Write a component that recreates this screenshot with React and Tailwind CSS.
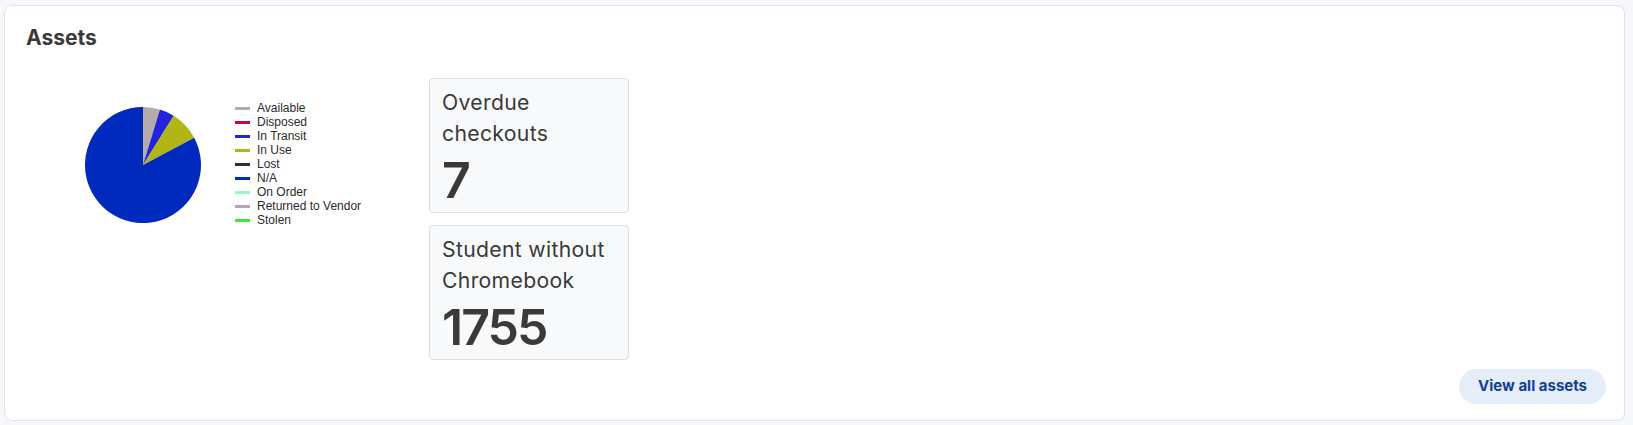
import React from "react";

const legend = [
  ["Available", "#b4acac"],
  ["Disposed", "#d8003a"],
  ["In Transit", "#2323d9"],
  ["In Use", "#b1b614"],
  ["Lost", "#263238"],
  ["N/A", "#0029bd"],
  ["On Order", "#93f6cd"],
  ["Returned to Vendor", "#b7a1c2"],
  ["Stolen", "#3be83b"],
];

const slices = [
  [0, 17, "#b4acac"],
  [17, 32, "#2323d9"],
  [32, 62, "#b1b614"],
  [62, 360, "#0029bd"],
];

function arc(cx, cy, r, a0, a1) {
  const rad = (a) => ((a - 90) * Math.PI) / 180;
  const x0 = cx + r * Math.cos(rad(a0));
  const y0 = cy + r * Math.sin(rad(a0));
  const x1 = cx + r * Math.cos(rad(a1));
  const y1 = cy + r * Math.sin(rad(a1));
  const large = a1 - a0 > 180 ? 1 : 0;
  return `M${cx},${cy} L${x0},${y0} A${r},${r} 0 ${large} 1 ${x1},${y1} Z`;
}

function Pie() {
  return (
    <svg width="118" height="118" viewBox="0 0 118 118">
      {slices.map(([a0, a1, c], i) => (
        <path key={i} d={arc(59, 59, 58, a0, a1)} fill={c} />
      ))}
    </svg>
  );
}

function StatCard({ label, value }) {
  return (
    <div className="w-[200px] rounded-[4px] border border-[#d9dee7] bg-[#f8f9fb] px-[12px] pt-[8px] pb-[4px]">
      <div className="text-[21.2px] leading-[31px] tracking-[0.015em] text-[#3a3a3a]">{label}</div>
      <div className="mt-[3px] text-[50px] font-semibold leading-[56px] tracking-[-2px] text-[#3a3a3a]">{value}</div>
    </div>
  );
}

export default function App() {
  return (
    <div
      className="min-h-[425px] bg-[#f5f7fb] pt-[5px] pl-[4px]"
      style={{ fontFamily: "Inter, 'Noto Sans', sans-serif" }}
    >
      <div className="flex w-[1621px] flex-col rounded-[8px] border border-[#dfe2ea] bg-white pl-[21px] pr-[18px] pt-[18px] pb-[16px]">
        <h2 className="text-[21px] font-bold leading-[28px] text-[#3a3a3a]">Assets</h2>
        <div className="mt-[26px] flex items-start">
          <div className="flex w-[403px] items-start">
            <div className="ml-[58px] mt-[28px]">
              <Pie />
            </div>
            <div
              className="ml-[33px] mt-[23px] flex flex-col text-[12px] leading-[14px] text-[#2a2a2a]"
              style={{ fontFamily: "'Liberation Sans', Arial, sans-serif" }}
            >
              {legend.map(([name, color]) => (
                <div key={name} className="flex h-[14px] items-center">
                  <span className="mr-[7px] inline-block h-[3px] w-[15px]" style={{ background: color }} />
                  <span>{name}</span>
                </div>
              ))}
            </div>
          </div>
          <div className="flex flex-col gap-[12px]">
            <StatCard label={<>Overdue<br />checkouts</>} value="7" />
            <StatCard label={<>Student without<br />Chromebook</>} value="1755" />
          </div>
        </div>
        <div className="mt-[9px] flex justify-end">
          <button className="h-[35px] rounded-full bg-[#e5edf9] px-[19px] text-[15px] font-bold text-[#123f96]">
            View all assets
          </button>
        </div>
      </div>
    </div>
  );
}
